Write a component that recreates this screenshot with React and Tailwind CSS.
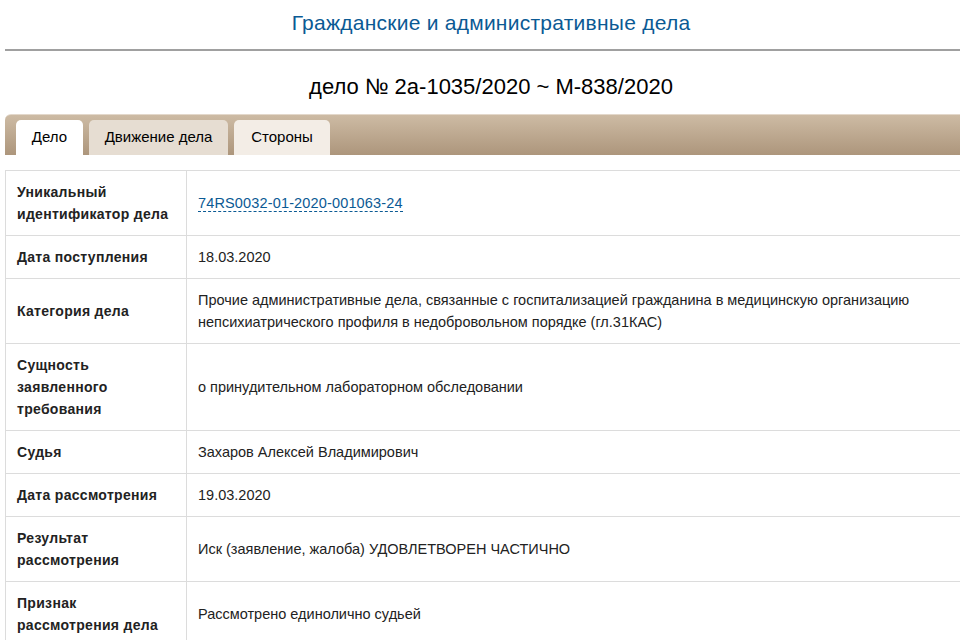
export default function App() {
  const rows = [
    { label: "Уникальный идентификатор дела", value: <a className="text-[#0b5a94] border-b border-dashed border-[#0b5a94] leading-[16px] inline-block tracking-[0.15px]">74RS0032-01-2020-001063-24</a> },
    { label: "Дата поступления", value: "18.03.2020" },
    { label: "Категория дела", value: "Прочие административные дела, связанные с госпитализацией гражданина в медицинскую организацию непсихиатрического профиля в недобровольном порядке (гл.31КАС)" },
    { label: "Сущность заявленного требования", value: "о принудительном лабораторном обследовании", narrow: true },
    { label: "Судья", value: "Захаров Алексей Владимирович" },
    { label: "Дата рассмотрения", value: "19.03.2020" },
    { label: "Результат рассмотрения", value: "Иск (заявление, жалоба) УДОВЛЕТВОРЕН ЧАСТИЧНО" },
    { label: "Признак рассмотрения дела", value: "Рассмотрено единолично судьей" },
  ];
  return (
    <div className="w-[960px] h-[640px] overflow-hidden bg-white" style={{ fontFamily: '"Liberation Sans", Arial, sans-serif' }}>
      <div className="ml-[5px] w-[972px]">
        <div className="h-[49px] flex items-center justify-center text-[21px] tracking-[0.25px] text-[#0b5a94] pb-[4px]">
          Гражданские и административные дела
        </div>
        <div className="h-[2px] bg-[#a0a0a0]"></div>
        <div className="h-[63px] flex items-center justify-center text-[22px] text-black pt-[8px]">
          дело № 2а-1035/2020 ~ М-838/2020
        </div>
        <div className="h-[41px] rounded-tl-[6px] border-t border-[#e3d8cb] bg-gradient-to-b from-[#cdbba4] to-[#ad967c] flex items-end pl-[11px] gap-[6px]">
          <div className="h-[35px] w-[67px] bg-white rounded-t-[5px] flex items-center justify-center text-[15px] text-black">Дело</div>
          <div className="h-[35px] w-[139px] bg-[#e6ddd2] rounded-t-[5px] flex items-center justify-center text-[15px] text-black">Движение дела</div>
          <div className="h-[35px] w-[96px] bg-[#f3ede6] rounded-t-[5px] flex items-center justify-center text-[15px] text-black">Стороны</div>
        </div>
        <div className="h-[15px]"></div>
        <table className="w-full border-collapse text-[14.5px] leading-[22px] text-[#222]">
          <tbody>
            {rows.map((r, i) => (
              <tr key={i}>
                <td className={"border border-[#dcdcdc] w-[181px] pl-[11px] py-[10px] font-bold text-[14px] tracking-[0.3px] align-middle " + (r.narrow ? "pr-[40px]" : "pr-[8px]")}>{r.label}</td>
                <td className="border border-[#dcdcdc] px-[11px] py-[10px] align-middle">{r.value}</td>
              </tr>
            ))}
          </tbody>
        </table>
      </div>
    </div>
  );
}
